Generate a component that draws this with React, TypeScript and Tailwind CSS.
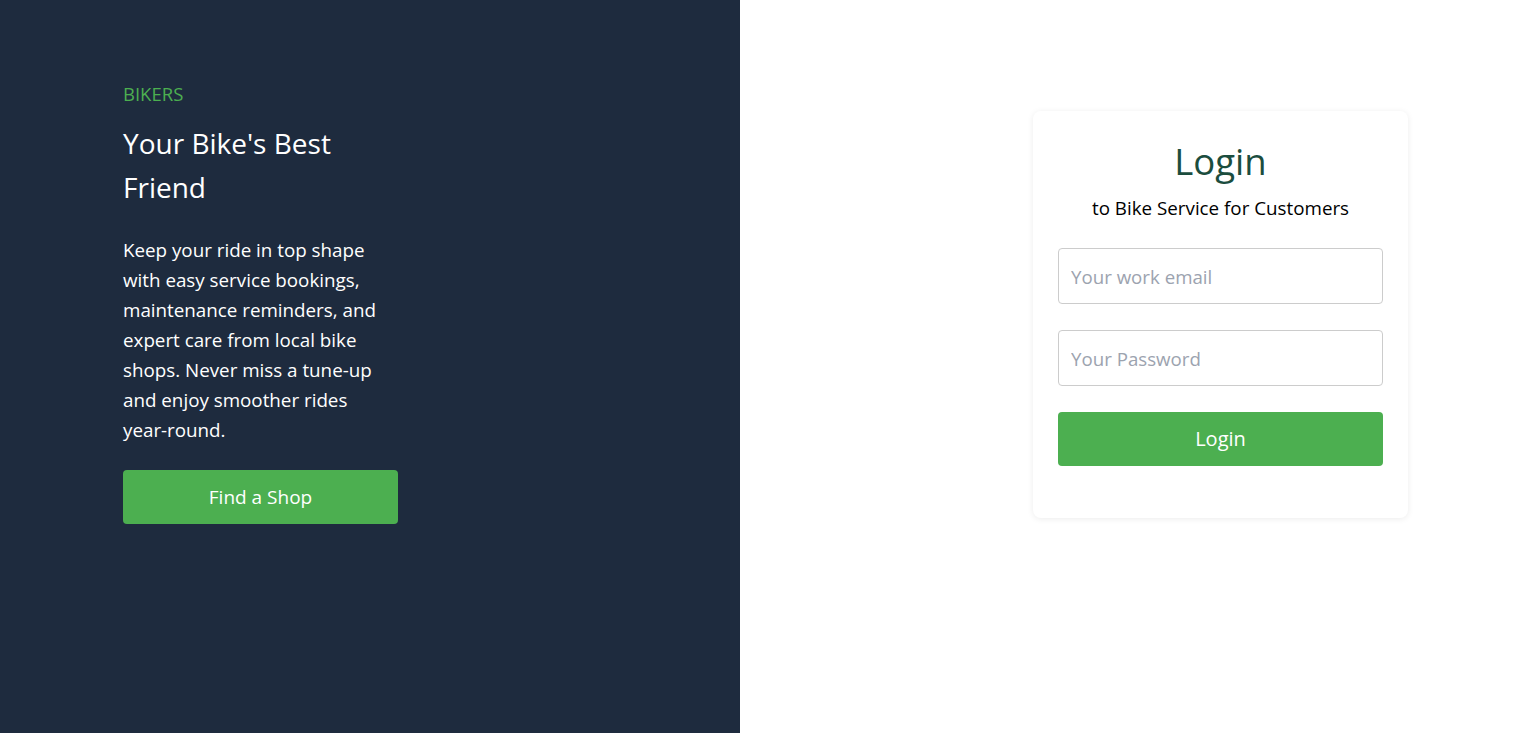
import React, { useState } from 'react';

export default function App() {
  const [email, setEmail] = useState('');
  const [password, setPassword] = useState('');

  return (
    <div
      className="flex min-h-screen w-full bg-white"
      style={{ fontFamily: '"Open Sans", "Noto Sans", sans-serif' }}
    >
      {/* Left hero */}
      <div className="w-[740px] shrink-0 bg-[#1e2b3e] pl-[123px] pt-[82px]">
        <div className="w-[275px]">
          <p className="text-[18.5px] leading-[24px] text-[#4caf50]">BIKERS</p>
          <h1 className="mt-[15px] text-[28px] leading-[44px] text-white">Your Bike's Best Friend</h1>
          <p className="mt-[26px] text-[18.8px] leading-[30px] text-white">
            Keep your ride in top shape with easy service bookings, maintenance reminders, and expert care from local bike shops. Never miss a tune-up and enjoy smoother rides{' '}
            <span className="whitespace-nowrap">year-round.</span>
          </p>
          <button className="mt-[25px] h-[54px] w-[275px] rounded-[4px] bg-[#4caf50] text-[19px] text-white">
            Find a Shop
          </button>
        </div>
      </div>

      {/* Right login */}
      <div className="flex flex-1 justify-end pr-[106px] pt-[111px]">
        <div className="h-fit w-[375px] rounded-[8px] bg-white px-[25px] pt-[24px] pb-[52px] shadow-[0_1px_6px_rgba(0,0,0,0.08)]">
          <h2 className="text-center text-[36.5px] leading-[52px] text-[#1b4d3e]">Login</h2>
          <p className="mt-[8px] text-center text-[18.8px] leading-[26px] text-black">to Bike Service for Customers</p>
          <form className="mt-[27px] flex flex-col" onSubmit={(e) => e.preventDefault()}>
            <input
              type="email"
              value={email}
              onChange={(e) => setEmail(e.target.value)}
              placeholder="Your work email"
              className="h-[56px] w-full rounded-[4px] border border-[#cccccc] px-[12px] text-[18.7px] text-gray-800 outline-none placeholder:text-[#9ca3af]"
            />
            <input
              type="password"
              value={password}
              onChange={(e) => setPassword(e.target.value)}
              placeholder="Your Password"
              className="mt-[26px] h-[56px] w-full rounded-[4px] border border-[#cccccc] px-[12px] text-[18.7px] text-gray-800 outline-none placeholder:text-[#9ca3af]"
            />
            <button type="submit" className="mt-[26px] h-[54px] w-full rounded-[4px] bg-[#4caf50] text-[20px] text-white">
              Login
            </button>
          </form>
        </div>
      </div>
    </div>
  );
}
